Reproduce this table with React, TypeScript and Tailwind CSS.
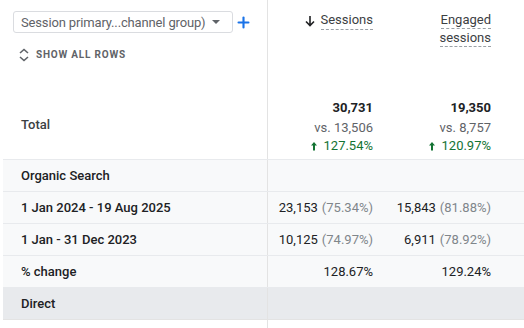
import { Plus } from "lucide-react";

const rows = [
	{ label: "Organic Search", a: "", b: "", group: true },
	{ label: "1 Jan 2024 - 19 Aug 2025", a: "23,153", ap: "(75.34%)", b: "15,843", bp: "(81.88%)" },
	{ label: "1 Jan - 31 Dec 2023", a: "10,125", ap: "(74.97%)", b: "6,911", bp: "(78.92%)" },
	{ label: "% change", a: "128.67%", b: "129.24%" },
];

const UpArrow = () => (
	<svg width="8" height="10" viewBox="0 0 8 10" className="mr-[6px]">
		<path d="M4 1 L7 4.5 H5 V9.5 H3 V4.5 H1 Z" fill="#137333" />
	</svg>
);

export default function App() {
	return (
		<div className="w-[524px] h-[328px] bg-white overflow-hidden text-[13px] text-[#202124]" style={{ fontFamily: "Roboto, 'Liberation Sans', sans-serif" }}>
			{/* Header */}
			<div className="flex h-[160px] border-b border-[#e8eaed] ml-[3px]">
				<div className="w-[265px] border-r border-[#e3e3e3] flex flex-col pt-[11px] pl-[10px]">
					<div className="flex items-center">
						<div className="w-[220px] h-[22px] border border-[#dadce0] rounded-[3px] flex items-center pl-[7px] pr-[12px] text-[#5f6368] text-[13px]">
							<span className="flex-1 leading-none tracking-[-0.15px] whitespace-nowrap">Session primary...channel group)</span>
							<span className="w-0 h-0 border-l-[4px] border-r-[4px] border-t-[4px] border-l-transparent border-r-transparent border-t-[#5f6368]" />
						</div>
						<Plus size={17} strokeWidth={3} className="ml-[2px] text-[#1a73e8]" />
					</div>
					<div className="flex items-center mt-[15px] pl-[5px] text-[#5f6368]">
						<svg width="12" height="14" viewBox="0 0 12 14" className="mr-[6px]">
							<path d="M2 5 L6 1.5 L10 5 M2 9 L6 12.5 L10 9" fill="none" stroke="#5f6368" strokeWidth="1.6" />
						</svg>
						<span className="text-[10px] font-bold tracking-[0.08em] leading-[14px]">SHOW ALL ROWS</span>
					</div>
					<div className="mt-auto mb-[26px] pl-[8px] text-[#3c4043] font-medium leading-[16px]">Total</div>
				</div>
				<div className="w-[120px] flex flex-col items-end pr-[15px] pt-[12px]">
					<div className="flex items-center text-[#3c4043] leading-[16px]">
						<svg width="12" height="12" viewBox="0 0 12 12" className="mr-[5px]">
							<path d="M6 1 V10 M2 6.5 L6 10.5 L10 6.5" fill="none" stroke="#202124" strokeWidth="1.6" />
						</svg>
						<span className="border-b border-dashed border-[#9aa0a6] pb-[1px]">Sessions</span>
					</div>
					<div className="mt-auto mb-[5px] flex flex-col items-end">
						<div className="font-bold leading-[18px]">30,731</div>
						<div className="mt-[2px] text-[#5f6368] leading-[18px]">vs. 13,506</div>
						<div className="flex items-center text-[#137333] leading-[17px]"><UpArrow />127.54%</div>
					</div>
				</div>
				<div className="w-[118px] flex flex-col items-end pr-[15px] pt-[12px]">
					<div className="flex flex-col items-end text-[#3c4043] leading-[16px]">
						<span className="border-b border-dashed border-[#9aa0a6]">Engaged</span>
						<span className="border-b border-dashed border-[#9aa0a6] mt-[1px]">sessions</span>
					</div>
					<div className="mt-auto mb-[5px] flex flex-col items-end">
						<div className="font-bold leading-[18px]">19,350</div>
						<div className="mt-[2px] text-[#5f6368] leading-[18px]">vs. 8,757</div>
						<div className="flex items-center text-[#137333] leading-[17px]"><UpArrow />120.97%</div>
					</div>
				</div>
			</div>

			{/* Body rows */}
			{rows.map((r) => (
				<div key={r.label} className="flex h-[32px] bg-[#f8f9fa] border-b border-[#e8eaed] ml-[3px]">
					<div className="w-[265px] border-r border-[#e3e3e3] flex items-center pl-[18px] font-medium">{r.label}</div>
					<div className="w-[120px] flex items-center justify-end pr-[15px]">
						{r.a}
						{r.ap && <span className="ml-[4px] text-[#80868b]">{r.ap}</span>}
					</div>
					<div className="w-[118px] flex items-center justify-end pr-[15px]">
						{r.b}
						{r.bp && <span className="ml-[4px] text-[#80868b]">{r.bp}</span>}
					</div>
				</div>
			))}
			<div className="flex h-[32px] bg-[#e8eaed] border-b border-[#e3e3e3] ml-[3px]">
				<div className="w-[265px] border-r border-[#e3e3e3] flex items-center pl-[18px] font-medium">Direct</div>
			</div>
			<div className="flex h-[20px] ml-[3px]">
				<div className="w-[265px] border-r border-[#e3e3e3]" />
			</div>
		</div>
	);
}
